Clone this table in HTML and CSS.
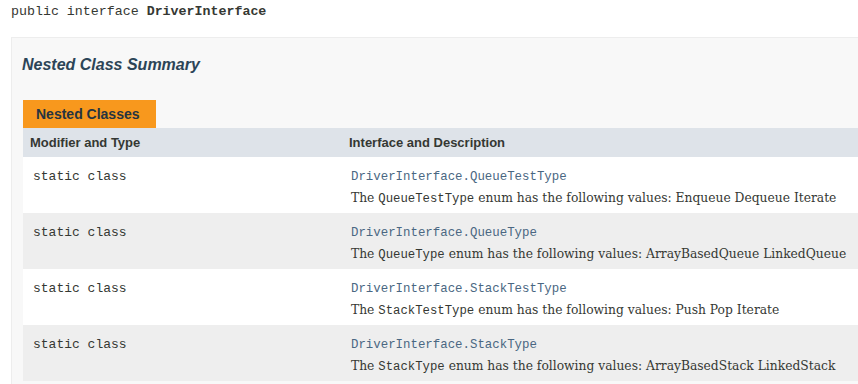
FILE: index.html
```html
<!DOCTYPE html>
<html lang="en">
<head>
    <meta charset="UTF-8">
    <title>DriverInterface</title>
    <link rel="stylesheet" href="styles.css">
</head>
<body>
    <pre class="sig">public interface <span class="type-name">DriverInterface</span></pre>

    <div class="summary">
        <h3>Nested Class Summary</h3>
        <div class="tab">Nested Classes</div>
        <table class="member-summary">
            <tr>
                <th class="col-first">Modifier and Type</th>
                <th class="col-last">Interface and Description</th>
            </tr>
            <tr class="alt">
                <td class="col-first"><code>static class</code></td>
                <td class="col-last">
                    <code><a href="#">DriverInterface.QueueTestType</a></code>
                    <div class="block">The <code>QueueTestType</code> enum has the following values: Enqueue Dequeue Iterate</div>
                </td>
            </tr>
            <tr class="row">
                <td class="col-first"><code>static class</code></td>
                <td class="col-last">
                    <code><a href="#">DriverInterface.QueueType</a></code>
                    <div class="block">The <code>QueueType</code> enum has the following values: ArrayBasedQueue LinkedQueue</div>
                </td>
            </tr>
            <tr class="alt">
                <td class="col-first"><code>static class</code></td>
                <td class="col-last">
                    <code><a href="#">DriverInterface.StackTestType</a></code>
                    <div class="block">The <code>StackTestType</code> enum has the following values: Push Pop Iterate</div>
                </td>
            </tr>
            <tr class="row">
                <td class="col-first"><code>static class</code></td>
                <td class="col-last">
                    <code><a href="#">DriverInterface.StackType</a></code>
                    <div class="block">The <code>StackType</code> enum has the following values: ArrayBasedStack LinkedStack</div>
                </td>
            </tr>
        </table>
    </div>
</body>
</html>
```

FILE: styles.css
```css
html {
    overflow: hidden;
}

body {
    margin: 0;
    background: #ffffff;
    color: #353833;
    font-family: "Liberation Sans", Arial, sans-serif;
    font-size: 14px;
}

.sig {
    margin: 0;
    padding: 4px 0 0 11px;
    font-family: "Liberation Mono", monospace;
    font-size: 13.3px;
    line-height: 16px;
}

.type-name {
    font-weight: bold;
}

.summary {
    width: 900px;
    margin: 17px 0 0 11px;
    padding: 0 0 10px 11px;
    background: #f8f8f8;
    border: 1px solid #ededed;
    border-right: none;
}

.summary h3 {
    margin: 17px 0 0 -1px;
    font-size: 16px;
    line-height: 20px;
    font-style: italic;
    font-weight: bold;
    color: #2c4557;
}

.tab {
    display: inline-block;
    margin-top: 25px;
    padding: 0 16px 0 13px;
    height: 28px;
    line-height: 28px;
    background: #f8981d;
    color: #253441;
    font-weight: bold;
    font-size: 14px;
}

.member-summary {
    width: 100%;
    border-collapse: collapse;
    border-spacing: 0;
}

.member-summary th {
    height: 29px;
    padding: 0 3px 0 7px;
    background: #dee3e9;
    text-align: left;
    font-size: 13px;
    color: #353833;
    vertical-align: middle;
}

.member-summary th.col-first {
    width: 309px;
}

.member-summary td {
    height: 56px;
    box-sizing: border-box;
    padding: 10px 3px 0 10px;
    vertical-align: top;
}

.member-summary td.col-last {
    padding-left: 9px;
}

.member-summary tr.alt {
    background: #ffffff;
}

.member-summary tr.row {
    background: #eeeeee;
}

code {
    font-family: "Liberation Mono", monospace;
    font-size: 13px;
    line-height: 16px;
}

.col-last code a {
    color: #4a6782;
    text-decoration: none;
    font-size: 12.4px;
}

.block {
    margin-top: 4px;
    font-family: "DejaVu Serif", Georgia, serif;
    font-size: 12.3px;
    line-height: 18px;
}

.block code {
    font-size: 12.3px;
}
```
